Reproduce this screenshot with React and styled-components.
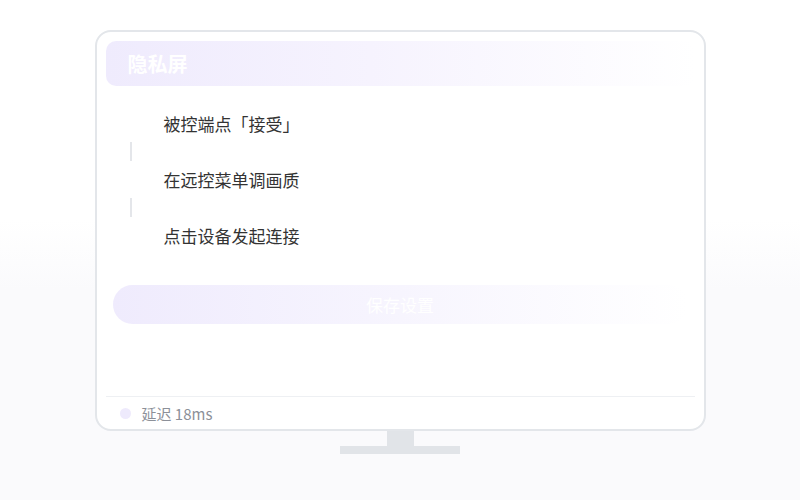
import React from 'react';
import styled, { createGlobalStyle } from 'styled-components';

const GlobalStyle = createGlobalStyle`
  html, body {
    margin: 0;
    padding: 0;
    background: #fff;
    font-family: "Noto Sans CJK SC", "Noto Sans", sans-serif;
  }
`;

const Page = styled.div`
  width: 800px;
  height: 500px;
  padding-top: 30px;
  box-sizing: border-box;
  display: flex;
  flex-direction: column;
  align-items: center;
  background: linear-gradient(180deg, #ffffff 44%, #fafafc 58%, #fafafc 100%);
`;

const Screen = styled.div`
  width: 611px;
  height: 401px;
  box-sizing: border-box;
  border: 2px solid #e3e6ea;
  border-radius: 16px;
  background: #fff;
  padding: 9px 9px 0;
  display: flex;
  flex-direction: column;
`;

const Header = styled.div`
  height: 45px;
  border-radius: 10px;
  background: linear-gradient(90deg, #efebfd 0%, #f6f3fe 45%, rgba(255, 255, 255, 0) 100%);
  display: flex;
  align-items: center;
  padding-left: 22px;
`;

const Title = styled.h1`
  margin: 0;
  font-size: 20px;
  font-weight: 700;
  color: #fff;
`;

const StepList = styled.ol`
  list-style: none;
  margin: 19px 0 0;
  padding: 0 0 0 24px;
`;

const Step = styled.li`
  height: 36px;
  display: flex;
  align-items: center;
  padding-left: 34px;
  font-size: 17px;
  color: #333;
`;

const Connector = styled.li`
  width: 2px;
  height: 20px;
  display: flex;
  align-items: center;
  &::before {
    content: '';
    width: 2px;
    height: 19px;
    background: #e4e6ea;
  }
`;

const SaveButton = styled.button`
  margin: 32px 7px 0;
  height: 39px;
  border: none;
  border-radius: 20px;
  background: linear-gradient(90deg, #efebfd 0%, #f7f5fe 50%, #ffffff 100%);
  color: #fff;
  font-family: inherit;
  font-size: 17px;
  cursor: pointer;
`;

const Footer = styled.div`
  margin-top: auto;
  border-top: 1px solid #eef0f3;
  height: 32px;
  display: flex;
  align-items: center;
  gap: 11px;
  padding-left: 14px;
  font-size: 15px;
  color: #8c9099;
`;

const Dot = styled.span`
  width: 11px;
  height: 11px;
  border-radius: 50%;
  background: #eeeafc;
`;

const Neck = styled.div`
  width: 27px;
  height: 15px;
  background: #e1e4e8;
`;

const Base = styled.div`
  width: 120px;
  height: 8px;
  background: #e1e4e8;
`;

const steps = ['被控端点「接受」', '在远控菜单调画质', '点击设备发起连接'];

export default function App() {
  return (
    <>
      <GlobalStyle />
      <Page>
        <Screen>
          <Header>
            <Title>隐私屏</Title>
          </Header>
          <StepList>
            {steps.map((text, i) => (
              <React.Fragment key={text}>
                {i > 0 && <Connector aria-hidden="true" />}
                <Step>{text}</Step>
              </React.Fragment>
            ))}
          </StepList>
          <SaveButton>保存设置</SaveButton>
          <Footer>
            <Dot />
            <span>延迟 18ms</span>
          </Footer>
        </Screen>
        <Neck />
        <Base />
      </Page>
    </>
  );
}
